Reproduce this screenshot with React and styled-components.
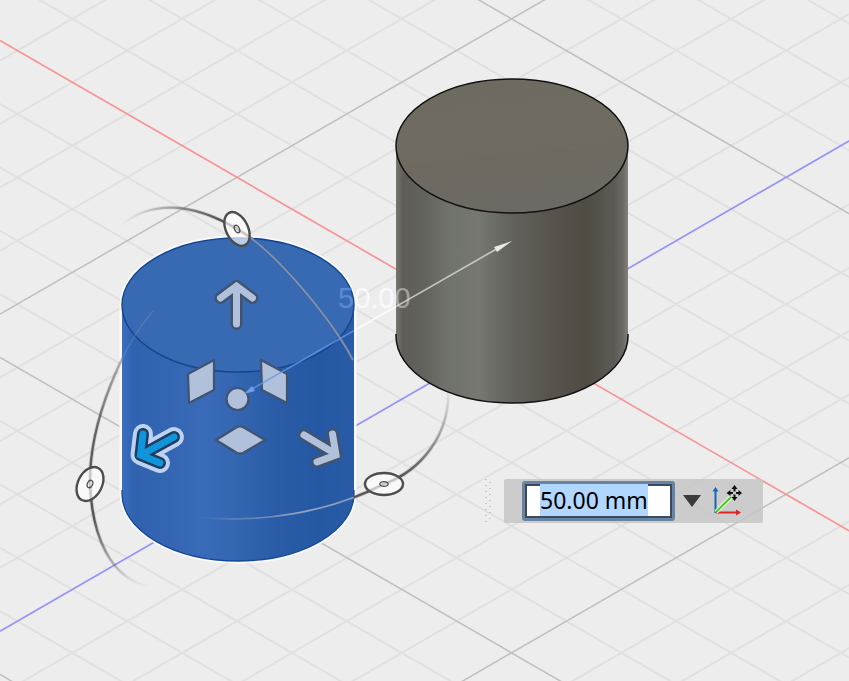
import React, { useEffect, useRef } from 'react';
import styled, { createGlobalStyle } from 'styled-components';

const GlobalStyle = createGlobalStyle`
  * { box-sizing: border-box; }
  body { margin: 0; background: #ededed; font-family: "Noto Sans", sans-serif; }
`;

const Viewport = styled.main`
  position: relative;
  width: 100%;
  height: 100vh;
  overflow: hidden;
  background: #ededed;
`;

const Scene = styled.svg`
  display: block;
  width: 100%;
  height: 100%;
`;

const ValuePanel = styled.form`
  position: absolute;
  left: 485px;
  top: 479px;
  display: flex;
  align-items: center;
  gap: 13px;
`;

const Grip = styled.svg`
  display: block;
  width: 6px;
  height: 44px;
  cursor: move;
`;

const Bar = styled.div`
  display: flex;
  align-items: center;
  height: 44px;
  padding: 0 18px;
  border-radius: 2px;
  background: rgba(198, 198, 198, 0.85);
`;

const ValueInput = styled.input`
  width: 153px;
  height: 40px;
  margin: 0;
  padding: 0 0 2px 15px;
  border: 3px solid #6784a3;
  border-radius: 3px;
  outline: 0;
  box-shadow: inset 0 0 0 2px #3b4a5c;
  background: #fff;
  color: #000;
  font: 23px/26px "Noto Sans", sans-serif;
  &::selection { background: #b1d6ff; color: #000; }
`;

const IconButton = styled.button`
  display: grid;
  place-items: center;
  width: ${(p) => p.$width}px;
  height: 40px;
  margin: 0;
  padding: 0;
  border: 0;
  background: none;
  svg { display: block; }
`;

const SLOPE = 0.5774;
const STEP = 63.4;
const ORIGIN = { down: 40.5, up: 631.2 };
const REACH = 4000;

function GridLines({ major }) {
  const lines = [];
  for (let i = -50; i <= 80; i += 1) {
    if (i === 0 || (i % 5 === 0) !== major) continue;
    const d = ORIGIN.down + i * STEP;
    const u = ORIGIN.up + i * STEP;
    lines.push(<line key={`d${i}`} x1="0" y1={d} x2={REACH} y2={d + REACH * SLOPE} />);
    lines.push(<line key={`u${i}`} x1="0" y1={u} x2={REACH} y2={u - REACH * SLOPE} />);
  }
  return (
    <g stroke={major ? '#bfbfbf' : '#e0e0e0'} strokeWidth={major ? 1.5 : 1.9}>
      {lines}
    </g>
  );
}

const bodyPath = (cx, top, bottom) =>
  `M${cx - 116} ${top}V${bottom}A116 67 0 0 0 ${cx + 116} ${bottom}V${top}Z`;
const outlinePath = (cx, top, bottom) =>
  `M${cx - 116} ${top}V${bottom}A116 67 0 0 0 ${cx + 116} ${bottom}V${top}A116 67 0 0 0 ${cx - 116} ${top}Z`;

const ARCS = [
  { id: 'arcTop', d: 'M120 226C150 200 192 202 237 229C275 250 332 320 353 360' },
  { id: 'arcLeft', d: 'M153 311C124 344 89 420 90 484C92 535 110 580 151 587' },
  { id: 'arcRight', d: 'M448 384C452 435 420 471 384 484C330 512 260 524 196 517' },
];

const Disc = ({ x, y, rx, ry, angle }) => (
  <g transform={`translate(${x} ${y}) rotate(${angle})`} stroke="#4d4d4d">
    <ellipse rx={rx} ry={ry} fill="#fff" fillOpacity=".66" strokeWidth="2.4" />
    <ellipse rx={rx * 0.22} ry={ry * 0.22} fill="none" strokeWidth="1.3" />
  </g>
);

const ARROWS = {
  up: 'M236.5 324V289M220.500 298L236.500 286L252.500 298',
  left: 'M174 437L143 454M143 434L140.500 455L160 463',
  right: 'M304 435L334 453M332.500 434L336 455L317 462',
};

const Arrow = ({ d, fill, outline, halo }) => (
  <g fill="none" strokeLinecap="round">
    {halo && <path d={d} stroke={halo} strokeWidth="20" strokeLinejoin="round" />}
    <path d={d} stroke={outline} strokeWidth="12" strokeLinejoin="round" />
    <path d={d} stroke={fill} strokeWidth="7" strokeLinejoin="miter" />
  </g>
);

function SceneDefs() {
  return (
    <defs>
      <linearGradient id="greySide">
        <stop offset="0" stopColor="#77766f" />
        <stop offset=".03" stopColor="#5f5d57" />
        <stop offset=".12" stopColor="#62625d" />
        <stop offset=".22" stopColor="#70726c" />
        <stop offset=".36" stopColor="#757770" />
        <stop offset=".5" stopColor="#62625c" />
        <stop offset=".65" stopColor="#59554e" />
        <stop offset=".82" stopColor="#504c44" />
        <stop offset=".94" stopColor="#5b5a54" />
        <stop offset=".98" stopColor="#6d6b64" />
        <stop offset="1" stopColor="#85827b" />
      </linearGradient>
      <linearGradient id="greyTop" x1="0" y1="0" x2=".2" y2="1">
        <stop offset="0" stopColor="#6e6a61" />
        <stop offset=".5" stopColor="#6f6b60" />
        <stop offset="1" stopColor="#6d6964" />
      </linearGradient>
      <linearGradient id="blueSide">
        <stop offset="0" stopColor="#3a70c2" />
        <stop offset=".05" stopColor="#3062b0" />
        <stop offset=".2" stopColor="#3365b2" />
        <stop offset=".35" stopColor="#396bb8" />
        <stop offset=".48" stopColor="#3466b2" />
        <stop offset=".65" stopColor="#2a5ca8" />
        <stop offset=".85" stopColor="#2558a3" />
        <stop offset="1" stopColor="#295ba6" />
      </linearGradient>
      <linearGradient id="arcTop" gradientUnits="userSpaceOnUse" x1="120" y1="226" x2="353" y2="360">
        <stop offset="0" stopColor="#555" stopOpacity="0" />
        <stop offset=".3" stopColor="#555" />
        <stop offset=".65" stopColor="#555" stopOpacity=".9" />
        <stop offset="1" stopColor="#555" stopOpacity=".1" />
      </linearGradient>
      <linearGradient id="arcLeft" gradientUnits="userSpaceOnUse" x1="0" y1="311" x2="0" y2="587">
        <stop offset="0" stopColor="#555" stopOpacity="0" />
        <stop offset=".45" stopColor="#555" stopOpacity=".9" />
        <stop offset=".75" stopColor="#555" />
        <stop offset="1" stopColor="#555" stopOpacity="0" />
      </linearGradient>
      <linearGradient id="arcRight" gradientUnits="userSpaceOnUse" x1="448" y1="384" x2="280" y2="560">
        <stop offset="0" stopColor="#555" stopOpacity="0" />
        <stop offset=".4" stopColor="#555" />
        <stop offset=".7" stopColor="#555" />
        <stop offset="1" stopColor="#555" stopOpacity=".6" />
      </linearGradient>
      <linearGradient id="arcInner" gradientUnits="userSpaceOnUse" x1="196" y1="0" x2="300" y2="0">
        <stop offset="0" stopColor="#8fa2bd" stopOpacity="0" />
        <stop offset="1" stopColor="#8fa2bd" />
      </linearGradient>
      <linearGradient id="dimension" gradientUnits="userSpaceOnUse" x1="0" y1="0" x2="849" y2="0">
        <stop offset=".4175" stopColor="#6396e8" stopOpacity=".8" />
        <stop offset=".4175" stopColor="#fff" stopOpacity=".85" />
        <stop offset=".4664" stopColor="#fff" stopOpacity=".85" />
        <stop offset=".4664" stopColor="#e4e4e0" stopOpacity=".75" />
      </linearGradient>
      <linearGradient id="dimensionText" gradientUnits="userSpaceOnUse" x1="0" y1="0" x2="849" y2="0">
        <stop offset=".4175" stopColor="#6b9cec" stopOpacity=".65" />
        <stop offset=".4175" stopColor="#fff" stopOpacity=".7" />
        <stop offset=".4664" stopColor="#fff" stopOpacity=".7" />
        <stop offset=".4664" stopColor="#d9d9d9" stopOpacity=".55" />
      </linearGradient>
      <clipPath id="outsideBlue">
        <path clipRule="evenodd" d={`M0 0H849V681H0Z ${outlinePath(238, 304, 494)}`} />
      </clipPath>
      <clipPath id="insideBlue">
        <path d={outlinePath(238, 304, 494)} />
      </clipPath>
    </defs>
  );
}

function Model() {
  return (
    <Scene role="img" aria-label="Move body in canvas">
      <SceneDefs />
      <GridLines major={false} />
      <GridLines major />
      <line x1="0" y1={ORIGIN.down} x2={REACH} y2={ORIGIN.down + REACH * SLOPE} stroke="#f99494" strokeWidth="1.7" />
      <line x1="0" y1={ORIGIN.up} x2={REACH} y2={ORIGIN.up - REACH * SLOPE} stroke="#9494f5" strokeWidth="1.7" />

      <path d={bodyPath(512, 146, 336)} fill="url(#greySide)" />
      <path d="M396 334V336A116 67 0 0 0 628 336V334" fill="none" stroke="#111" strokeWidth="1.5" />
      <ellipse cx="512" cy="146" rx="116" ry="67" fill="url(#greyTop)" stroke="#111" strokeWidth="1.5" />

      <path d={outlinePath(238, 305, 494)} fill="#fff" stroke="#fafafa" strokeWidth="5" />
      <path d={bodyPath(238, 305, 494)} fill="url(#blueSide)" />
      <path d="M122 490V494A116 67 0 0 0 354 494V490" fill="none" stroke="#174a95" strokeWidth="1.3" />
      <ellipse cx="238" cy="305" rx="116" ry="67" fill="#3869b3" stroke="#134591" strokeWidth="1.4" />

      <g clipPath="url(#outsideBlue)" fill="none">
        {ARCS.map((a) => <path key={`${a.id}Glow`} d={a.d} stroke={`url(#${a.id})`} strokeWidth="4" strokeOpacity=".25" />)}
        {ARCS.map((a) => <path key={a.id} d={a.d} stroke={`url(#${a.id})`} strokeWidth="2.3" />)}
      </g>
      <g clipPath="url(#insideBlue)" fill="none" strokeWidth="1.8">
        <path d={ARCS[0].d} stroke="#4a5f80" strokeOpacity=".6" strokeWidth="3" />
        <path d={ARCS[0].d} stroke="#8c9dba" strokeOpacity=".8" />
        <path d={ARCS[1].d} stroke="#8395b4" strokeOpacity=".3" />
        <path d={ARCS[2].d} stroke="url(#arcInner)" />
      </g>

      <g fill="#b1c1db" stroke="#40546f" strokeWidth="2.2" strokeLinejoin="round">
        <path d="M188 374L214 360V390L189 403Z" />
        <path d="M261 360L287 374V403L262 390Z" />
        <path d="M216 440L237 427Q240 426 243 427L265 440L243 453Q240 454 237 453Z" />
        <circle cx="237.500" cy="399" r="11" />
      </g>
      <Arrow d={ARROWS.up} fill="#b1c1db" outline="#40546f" />
      <Arrow d={ARROWS.right} fill="#b1c1db" outline="#40546f" />
      <Arrow d={ARROWS.left} fill="#1095dd" outline="#1d3d60" halo="#bcd2f0" />

      <Disc x={237} y={229} rx={11} ry={18} angle={-26} />
      <Disc x={90} y={484} rx={12} ry={18} angle={27} />
      <Disc x={384} y={484} rx={19} ry={11} angle={0} />

      <path d="M252 389L500 247" stroke="url(#dimension)" strokeWidth="1.6" />
      <path d="M512 241L494 247L497 252Z" fill="#e8e8e4" />
      <path d="M244 394L252 386L255 391Z" fill="#6e9ee8" />
      <text x="338" y="308" fontFamily="Liberation Sans, sans-serif" fontSize="29" fill="url(#dimensionText)">50.00</text>
    </Scene>
  );
}

const gripDots = [];
for (let row = 0; row < 15; row += 1) {
  gripDots.push(<rect key={row} x={row % 2 ? 4 : 0} y={row * 3} width="2" height="1" />);
}

const AxesIcon = () => (
  <svg width="30" height="32" viewBox="0 0 30 32" fill="none" aria-hidden="true">
    <path d="M3.5 28V5" stroke="#1466b8" strokeWidth="2" />
    <path d="M3.5 2L6.500 6.500H.5Z" fill="#1466b8" />
    <path d="M4 27.500H26" stroke="#e32222" strokeWidth="2" />
    <path d="M29 27.500L24 24.500V30.500Z" fill="#e32222" />
    <path d="M4 27L19 12" stroke="#eaffdf" strokeWidth="4" />
    <path d="M4 27L19 12" stroke="#3fc51d" strokeWidth="1.8" />
    <path d="M22.500 0L25.500 4H19.500ZM22.500 16L25.500 12H19.500ZM14.500 8L18.500 5V11ZM30 8L26.500 5V11Z" fill="#111" />
    <path d="M22.500 3V6.500M22.500 9.500V13M18 8H21M24 8H27" stroke="#111" strokeWidth="2" />
  </svg>
);

export default function App() {
  const valueRef = useRef(null);
  useEffect(() => {
    valueRef.current.focus();
    valueRef.current.select();
  }, []);

  return (
    <>
      <GlobalStyle />
      <Viewport>
        <Model />
        <ValuePanel onSubmit={(e) => e.preventDefault()}>
          <Grip fill="#c8c8c8" aria-hidden="true">{gripDots}</Grip>
          <Bar>
            <ValueInput ref={valueRef} type="text" aria-label="Distance" defaultValue="50.00 mm" />
            <IconButton type="button" $width={34} aria-label="Recent values">
              <svg width="18" height="12" aria-hidden="true"><path d="M0 0H18L9 12Z" fill="#3a3a3a" /></svg>
            </IconButton>
            <IconButton type="button" $width={36} aria-label="Set pivot axes">
              <AxesIcon />
            </IconButton>
          </Bar>
        </ValuePanel>
      </Viewport>
    </>
  );
}
